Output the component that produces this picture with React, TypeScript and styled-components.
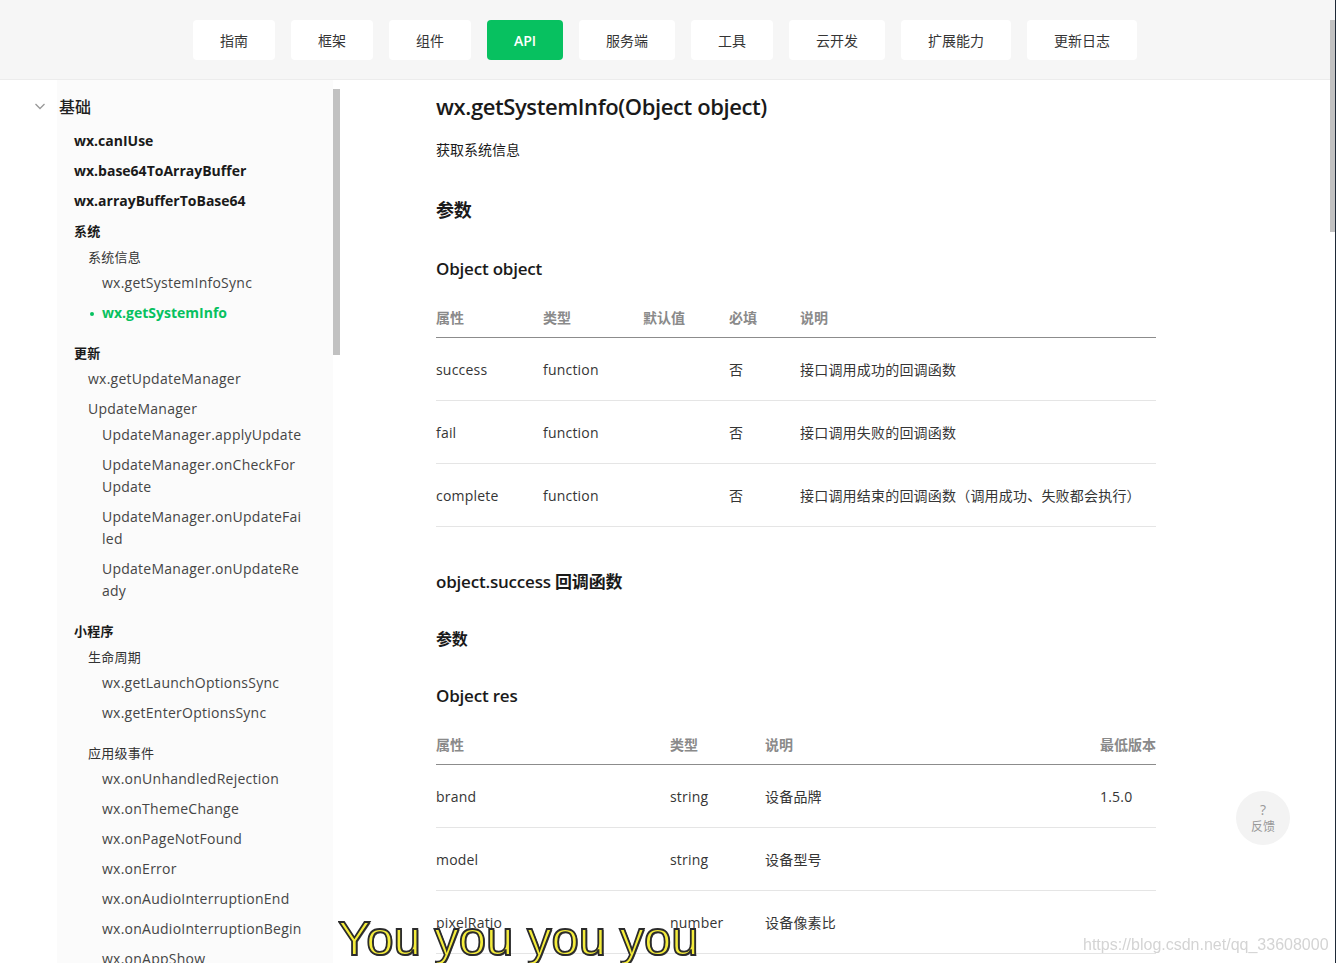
import React from 'react'
import styled, { createGlobalStyle, css } from 'styled-components'

const GlobalStyle = createGlobalStyle`
  html, body { margin: 0; padding: 0; overflow: hidden; background: #fff; }
  body { font-family: "Open Sans", "Noto Sans CJK SC", sans-serif; color: #333; }
`

type RowKind = 'top' | 'group' | 'sub' | 'subitem' | 'subhead' | 'item' | 'active'

const navTabs = ['指南', '框架', '组件', 'API', '服务端', '工具', '云开发', '扩展能力', '更新日志']

const sideRows: { t: string; k: RowKind; gap?: number }[] = [
  { t: 'wx.canIUse', k: 'top' },
  { t: 'wx.base64ToArrayBuffer', k: 'top' },
  { t: 'wx.arrayBufferToBase64', k: 'top' },
  { t: '系统', k: 'group' },
  { t: '系统信息', k: 'sub' },
  { t: 'wx.getSystemInfoSync', k: 'item' },
  { t: 'wx.getSystemInfo', k: 'active' },
  { t: '更新', k: 'group', gap: 10 },
  { t: 'wx.getUpdateManager', k: 'subitem' },
  { t: 'UpdateManager', k: 'subhead' },
  { t: 'UpdateManager.applyUpdate', k: 'item' },
  { t: 'UpdateManager.onCheckFor\nUpdate', k: 'item' },
  { t: 'UpdateManager.onUpdateFai\nled', k: 'item' },
  { t: 'UpdateManager.onUpdateRe\nady', k: 'item' },
  { t: '小程序', k: 'group', gap: 10 },
  { t: '生命周期', k: 'sub' },
  { t: 'wx.getLaunchOptionsSync', k: 'item' },
  { t: 'wx.getEnterOptionsSync', k: 'item' },
  { t: '应用级事件', k: 'sub', gap: 10 },
  { t: 'wx.onUnhandledRejection', k: 'item' },
  { t: 'wx.onThemeChange', k: 'item' },
  { t: 'wx.onPageNotFound', k: 'item' },
  { t: 'wx.onError', k: 'item' },
  { t: 'wx.onAudioInterruptionEnd', k: 'item' },
  { t: 'wx.onAudioInterruptionBegin', k: 'item' },
  { t: 'wx.onAppShow', k: 'item' },
  { t: 'wx.onAppHide', k: 'item' },
]

const paramCols = '107px 100px 86px 71px 1fr'
const paramHead = ['属性', '类型', '默认值', '必填', '说明']
const paramRows = [
  ['success', 'function', '', '否', '接口调用成功的回调函数'],
  ['fail', 'function', '', '否', '接口调用失败的回调函数'],
  ['complete', 'function', '', '否', '接口调用结束的回调函数（调用成功、失败都会执行）'],
]

const resCols = '234px 95px 1fr 56px'
const resHead = ['属性', '类型', '说明', '最低版本']
const resRows = [
  ['brand', 'string', '设备品牌', '1.5.0'],
  ['model', 'string', '设备型号', ''],
  ['pixelRatio', 'number', '设备像素比', ''],
  ['screenWidth', 'number', '屏幕宽度，单位px', '1.1.0'],
]

const Page = styled.div`
  min-height: 100vh;
  display: flex;
  flex-direction: column;
`

const Header = styled.header`
  height: 80px;
  background: #f6f6f6;
  border-bottom: 1px solid #ececec;
  display: flex;
  justify-content: center;
  align-items: flex-start;
  padding: 20px 6px 0 0;
  box-sizing: border-box;
  gap: 16px;
`

const Tab = styled.div<{ $active?: boolean }>`
  height: 40px;
  padding: 0 27px;
  border-radius: 4px;
  background: #fff;
  display: flex;
  align-items: center;
  font-size: 14px;
  color: #353535;
  ${p => p.$active && css`
    background: #07c160;
    color: #fff;
    font-weight: 600;
  `}
`

const Body = styled.div`
  display: flex;
  align-items: flex-start;
`

const Sidebar = styled.aside`
  width: 340px;
  flex-shrink: 0;
  position: relative;
  padding-top: 7px;
  box-sizing: border-box;
  background: linear-gradient(to right, #fff 57px, #fbfbfb 57px, #fbfbfb 333px, #fff 333px);
`

const SideThumb = styled.div`
  position: absolute;
  left: 333px;
  top: 9px;
  width: 7px;
  height: 266px;
  background: #c1c1c1;
`

const CatRow = styled.div`
  height: 38px;
  display: flex;
  align-items: center;
  gap: 12px;
  padding-left: 33px;
  margin-bottom: 5px;
  font-size: 16px;
  font-weight: 500;
  color: #222;
`

const kindStyles: Record<RowKind, ReturnType<typeof css>> = {
  top: css`padding-left: 74px; font-weight: 700; color: #1a1a1a; margin-bottom: 8px; letter-spacing: 0;`,
  group: css`padding-left: 74px; font-size: 13px; font-weight: 700; color: #1a1a1a; margin-bottom: 4px;`,
  sub: css`padding-left: 88px; font-size: 13px; color: #333; margin-bottom: 4px;`,
  subitem: css`padding-left: 88px; color: #454545; margin-bottom: 8px;`,
  subhead: css`padding-left: 88px; color: #454545; margin-bottom: 4px;`,
  item: css`padding-left: 102px; color: #454545; margin-bottom: 8px;`,
  active: css`
    padding-left: 102px; color: #07c160; font-weight: 700; margin-bottom: 8px; position: relative; letter-spacing: 0;
    &::before { content: ''; position: absolute; left: 90px; top: 10px; width: 4px; height: 4px; border-radius: 50%; background: #07c160; }
  `,
}

const SideRow = styled.div<{ $kind: RowKind; $gap?: number }>`
  font-size: 14px;
  line-height: 22px;
  letter-spacing: 0.25px;
  white-space: pre-line;
  padding-top: ${p => p.$gap || 0}px;
  ${p => kindStyles[p.$kind]}
`

const Main = styled.main`
  flex: 1;
  padding: 11px 0 0 96px;
`

const Content = styled.div`
  width: 720px;
`

const Title = styled.h1`
  margin: 0;
  font-size: 22px;
  line-height: 30px;
  font-weight: 600;
  letter-spacing: -0.4px;
  color: #1a1a1a;
`

const Desc = styled.p`
  margin: 18px 0 0;
  font-size: 14px;
  line-height: 22px;
  color: #1a1a1a;
`

const Heading = styled.h2<{ $size: number; $gap: number }>`
  margin: ${p => p.$gap}px 0 0;
  font-size: ${p => p.$size}px;
  line-height: 26px;
  font-weight: 600;
  letter-spacing: -0.2px;
  color: #1a1a1a;
`

const Table = styled.div`
  margin-top: 14px;
`

const Tr = styled.div<{ $cols: string; $head?: boolean }>`
  display: grid;
  grid-template-columns: ${p => p.$cols};
  align-items: center;
  height: ${p => (p.$head ? 41 : 62)}px;
  border-bottom: 1px solid ${p => (p.$head ? '#8c8c8c' : '#e5e5e5')};
  font-size: 14px;
  font-weight: ${p => (p.$head ? 700 : 400)};
  letter-spacing: ${p => (p.$head ? 0 : 0.2)}px;
  color: ${p => (p.$head ? '#8a8a8a' : '#353535')};
`

const Cell = styled.div`
  white-space: nowrap;
`

const Feedback = styled.div`
  position: fixed;
  left: 1236px;
  top: 791px;
  width: 54px;
  height: 54px;
  border-radius: 50%;
  background: #f3f3f3;
  display: flex;
  flex-direction: column;
  align-items: center;
  justify-content: center;
  color: #999;
  font-size: 12px;
  line-height: 16px;
  span:first-child { font-size: 14px; line-height: 18px; }
`

const PageThumb = styled.div`
  position: fixed;
  right: 1px;
  top: 20px;
  width: 5px;
  height: 212px;
  background: #c1c1c1;
`

const EdgeLine = styled.div`
  position: fixed;
  right: 0;
  top: 0;
  width: 1px;
  height: 100%;
  background: #1f2a38;
`

const Subtitle = styled.div`
  position: fixed;
  left: 338px;
  top: 914px;
  font-family: "Liberation Sans", Arial, sans-serif;
  font-size: 49px;
  line-height: 49px;
  color: #f4ec3c;
  -webkit-text-stroke: 1.8px #2b2b2b;
  text-shadow: 1px 1px 0 #555;
  white-space: nowrap;
`

const Watermark = styled.div`
  position: fixed;
  left: 1083px;
  top: 935px;
  font-family: "Liberation Sans", Arial, sans-serif;
  font-size: 16px;
  line-height: 20px;
  color: #d4d4d4;
  white-space: nowrap;
`

const Chevron = () => (
  <svg width="14" height="14" viewBox="0 0 14 14" fill="none" stroke="#999" strokeWidth="1.3">
    <path d="M2.5 5 L7 9.5 L11.5 5" />
  </svg>
)

export default function App() {
  return (
    <Page>
      <GlobalStyle />
      <Header>
        {navTabs.map(t => (
          <Tab key={t} $active={t === 'API'}>{t}</Tab>
        ))}
      </Header>
      <Body>
        <Sidebar>
          <SideThumb />
          <CatRow>
            <Chevron />
            基础
          </CatRow>
          {sideRows.map(r => (
            <SideRow key={r.t} $kind={r.k} $gap={r.gap}>{r.t}</SideRow>
          ))}
        </Sidebar>
        <Main>
          <Content>
            <Title>wx.getSystemInfo(Object object)</Title>
            <Desc>获取系统信息</Desc>
            <Heading $size={18} $gap={36}>参数</Heading>
            <Heading $size={17} $gap={33}>Object object</Heading>
            <Table>
              <Tr $cols={paramCols} $head>
                {paramHead.map(h => <Cell key={h}>{h}</Cell>)}
              </Tr>
              {paramRows.map(r => (
                <Tr key={r[0]} $cols={paramCols}>
                  {r.map((c, i) => <Cell key={i}>{c}</Cell>)}
                </Tr>
              ))}
            </Table>
            <Heading $size={17} $gap={42}>object.success 回调函数</Heading>
            <Heading $size={16} $gap={31}>参数</Heading>
            <Heading $size={17} $gap={31}>Object res</Heading>
            <Table>
              <Tr $cols={resCols} $head>
                {resHead.map(h => <Cell key={h}>{h}</Cell>)}
              </Tr>
              {resRows.map(r => (
                <Tr key={r[0]} $cols={resCols}>
                  {r.map((c, i) => <Cell key={i}>{c}</Cell>)}
                </Tr>
              ))}
            </Table>
          </Content>
        </Main>
      </Body>
      <Feedback>
        <span>?</span>
        <span>反馈</span>
      </Feedback>
      <PageThumb />
      <EdgeLine />
      <Subtitle>You you you you</Subtitle>
      <Watermark>https://blog.csdn.net/qq_33608000</Watermark>
    </Page>
  )
}
